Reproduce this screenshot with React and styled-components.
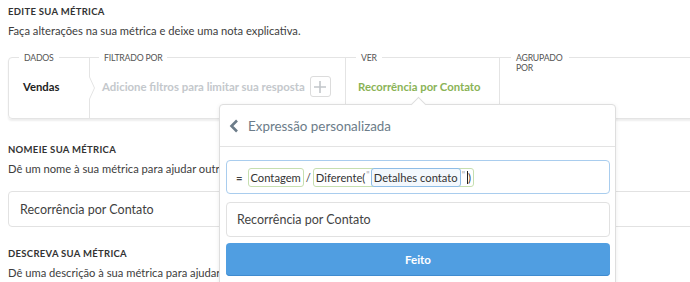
import React from "react";
import styled, { createGlobalStyle } from "styled-components";

const GlobalStyle = createGlobalStyle`
  body {
    margin: 0;
    background: #fff;
    font-family: Lato, "Open Sans", Arial, sans-serif;
    overflow: hidden;
  }
`;

const Page = styled.div`
  position: relative;
  width: 690px;
  height: 282px;
  overflow: hidden;
  padding: 6px 0 0 8px;
  box-sizing: border-box;
`;

const SectionTitle = styled.h3`
  margin: ${(p) => p.$top || 0}px 0 0;
  font-size: 9.5px;
  line-height: 12px;
  font-weight: 700;
  letter-spacing: 0.3px;
  text-transform: uppercase;
  color: #333;
`;

const Hint = styled.p`
  margin: 6px 0 0;
  font-size: 11.2px;
  line-height: 14px;
  color: #3d3d3d;
  white-space: nowrap;
`;

const QueryBox = styled.div`
  display: flex;
  width: 820px;
  height: 60px;
  margin-top: 19px;
  border: 1px solid #e4e4e4;
  border-radius: 4px;
  box-shadow: 0 2px 2px rgba(0, 0, 0, 0.07);
`;

const Column = styled.div`
  display: flex;
  flex-direction: column;
  width: ${(p) => (p.$width ? `${p.$width}px` : "auto")};
  flex: ${(p) => (p.$width ? "none" : 1)};
  padding-left: ${(p) => p.$pad || 0}px;
  border-left: ${(p) => (p.$line ? "1px solid #e4e4e4" : "none")};
  box-sizing: border-box;
`;

const Legend = styled.span`
  align-self: flex-start;
  max-width: ${(p) => p.$max || "none"};
  margin: -5px 0 0 0;
  padding: 0 5px;
  background: #fff;
  font-size: 8.7px;
  line-height: 10px;
  letter-spacing: -0.2px;
  color: #555;
  text-transform: uppercase;
`;

const ColumnBody = styled.div`
  flex: 1;
  display: flex;
  align-items: center;
  gap: 5px;
  padding: 0 0 8px ${(p) => p.$pad || 0}px;
`;

const DataName = styled.span`
  font-size: 11.3px;
  font-weight: 700;
  color: #222;
`;

const Placeholder = styled.span`
  font-size: 11.4px;
  font-weight: 700;
  color: #c4c8cc;
  white-space: nowrap;
`;

const ViewName = styled.span`
  font-size: 11.3px;
  font-weight: 700;
  color: #8ab356;
  white-space: nowrap;
`;

const AddButton = styled.button`
  width: 21px;
  height: 21px;
  padding: 0;
  display: flex;
  align-items: center;
  justify-content: center;
  border: 1px solid #dcdcdc;
  border-radius: 3px;
  background: #fff;
`;

const ChevronDivider = styled.div`
  display: flex;
  flex-direction: column;
  width: 6px;
  flex: none;
`;

const DividerLine = styled.div`
  flex: 1;
  border-left: 1px solid #e4e4e4;
`;

const FieldBox = styled.div`
  width: 800px;
  height: 36px;
  margin-top: 15px;
  display: flex;
  align-items: center;
  padding-left: 11px;
  box-sizing: border-box;
  border: 1px solid #e2e2e2;
  border-radius: 4px;
  font-size: 12.5px;
  color: #3f3f3f;
`;

const Popover = styled.div`
  position: absolute;
  left: 219px;
  top: 104px;
  width: 397px;
  height: 220px;
  box-sizing: border-box;
  background: #fff;
  border: 1px solid #dedede;
  border-radius: 4px;
  box-shadow: 0 1px 4px rgba(0, 0, 0, 0.08);

  &::before {
    content: "";
    position: absolute;
    left: 193px;
    top: -6px;
    width: 10px;
    height: 10px;
    background: #fff;
    border-top: 1px solid #dedede;
    border-left: 1px solid #dedede;
    transform: rotate(45deg);
  }
`;

const PopoverHeader = styled.div`
  display: flex;
  align-items: center;
  gap: 9px;
  height: 41px;
  padding: 0 9px;
  border-bottom: 1px solid #e3e3e3;
  font-size: 13.4px;
  color: #6c7c89;
`;

const PopoverBody = styled.div`
  display: flex;
  flex-direction: column;
  gap: 8px;
  padding: 13px 5px 0 6px;
`;

const ExpressionInput = styled.div`
  display: flex;
  align-items: center;
  height: 34px;
  padding: 0 9px;
  box-sizing: border-box;
  border: 1px solid #a9cdee;
  border-radius: 4px;
  font-size: 11.2px;
  color: #333;
`;

const Operator = styled.span`
  margin: 0 ${(p) => p.$gap || 2}px 0 0;
  color: #444;
  font-weight: ${(p) => (p.$bold ? 700 : 400)};
`;

const Token = styled.span`
  display: inline-flex;
  align-items: center;
  height: 17px;
  padding: 0 2px;
  border: 1px solid ${(p) => (p.$kind === "field" ? "#8fbde6" : "#c6dfb0")};
  background: ${(p) => (p.$kind === "field" ? "#f3f8fd" : "#fff")};
  border-radius: 3px;
  margin-right: ${(p) => (p.$kind === "field" ? 0 : 2)}px;
  color: #333;
  white-space: nowrap;
`;

const Quote = styled.span`
  color: #aaa;
  font-size: 9px;
  margin: 0 1px;
  align-self: flex-start;
`;

const Caret = styled.span`
  display: inline-block;
  width: 1px;
  height: 13px;
  margin-left: 1px;
  background: #222;
`;

const NameInput = styled.div`
  display: flex;
  align-items: center;
  height: 35px;
  padding: 0 10px;
  box-sizing: border-box;
  border: 1px solid #e1e1e1;
  border-radius: 4px;
  font-size: 12.5px;
  color: #444;
`;

const DoneButton = styled.button`
  height: 33px;
  margin-top: -2px;
  border: none;
  border-radius: 4px;
  background: #509ee1;
  box-shadow: inset 0 -1px 0 #3f8bcf;
  color: #fff;
  font-family: inherit;
  font-size: 11.5px;
  font-weight: 700;
`;

const BackIcon = () => (
  <svg width="10" height="14" viewBox="0 0 10 14">
    <polyline
      points="8,1.5 2.5,7 8,12.5"
      fill="none"
      stroke="#6c7c89"
      strokeWidth="2.6"
    />
  </svg>
);

const Chevron = () => (
  <svg width="6" height="22" viewBox="0 0 6 22">
    <polyline points="0.5,0 5.5,11 0.5,22" fill="none" stroke="#e4e4e4" />
  </svg>
);

const Plus = () => (
  <svg width="12" height="12" viewBox="0 0 12 12">
    <path d="M6 0v12M0 6h12" stroke="#c2c6ca" strokeWidth="1.6" />
  </svg>
);

export default function App() {
  return (
    <Page>
      <GlobalStyle />
      <SectionTitle>Edite sua métrica</SectionTitle>
      <Hint>Faça alterações na sua métrica e deixe uma nota explicativa.</Hint>

      <QueryBox>
        <Column $width={80} $pad={10}>
          <Legend>Dados</Legend>
          <ColumnBody $pad={4}>
            <DataName>Vendas</DataName>
          </ColumnBody>
        </Column>
        <ChevronDivider>
          <DividerLine />
          <Chevron />
          <DividerLine />
        </ChevronDivider>
        <Column $width={250} $pad={4}>
          <Legend>Filtrado por</Legend>
          <ColumnBody $pad={3}>
            <Placeholder>Adicione filtros para limitar sua resposta</Placeholder>
            <AddButton>
              <Plus />
            </AddButton>
          </ColumnBody>
        </Column>
        <Column $width={154} $pad={10} $line>
          <Legend>Ver</Legend>
          <ColumnBody $pad={2}>
            <ViewName>Recorrência por Contato</ViewName>
          </ColumnBody>
        </Column>
        <Column $pad={11} $line>
          <Legend $max="48px">Agrupado por</Legend>
          <ColumnBody />
        </Column>
      </QueryBox>

      <SectionTitle $top={25}>Nomeie sua métrica</SectionTitle>
      <Hint>Dê um nome à sua métrica para ajudar outras pessoas a entender o que ela mostra.</Hint>
      <FieldBox>Recorrência por Contato</FieldBox>

      <SectionTitle $top={21}>Descreva sua métrica</SectionTitle>
      <Hint>Dê uma descrição à sua métrica para ajudar outras pessoas a entendê-la.</Hint>

      <Popover>
        <PopoverHeader>
          <BackIcon />
          Expressão personalizada
        </PopoverHeader>
        <PopoverBody>
          <ExpressionInput>
            <Operator $bold $gap={5}>=</Operator>
            <Token>Contagem</Token>
            <Operator>/</Operator>
            <Token>
              Diferente(
              <Quote>"</Quote>
              <Token $kind="field">Detalhes contato</Token>
              <Quote>"</Quote>
              <Caret />)
            </Token>
          </ExpressionInput>
          <NameInput>Recorrência por Contato</NameInput>
          <DoneButton>Feito</DoneButton>
        </PopoverBody>
      </Popover>
    </Page>
  );
}
